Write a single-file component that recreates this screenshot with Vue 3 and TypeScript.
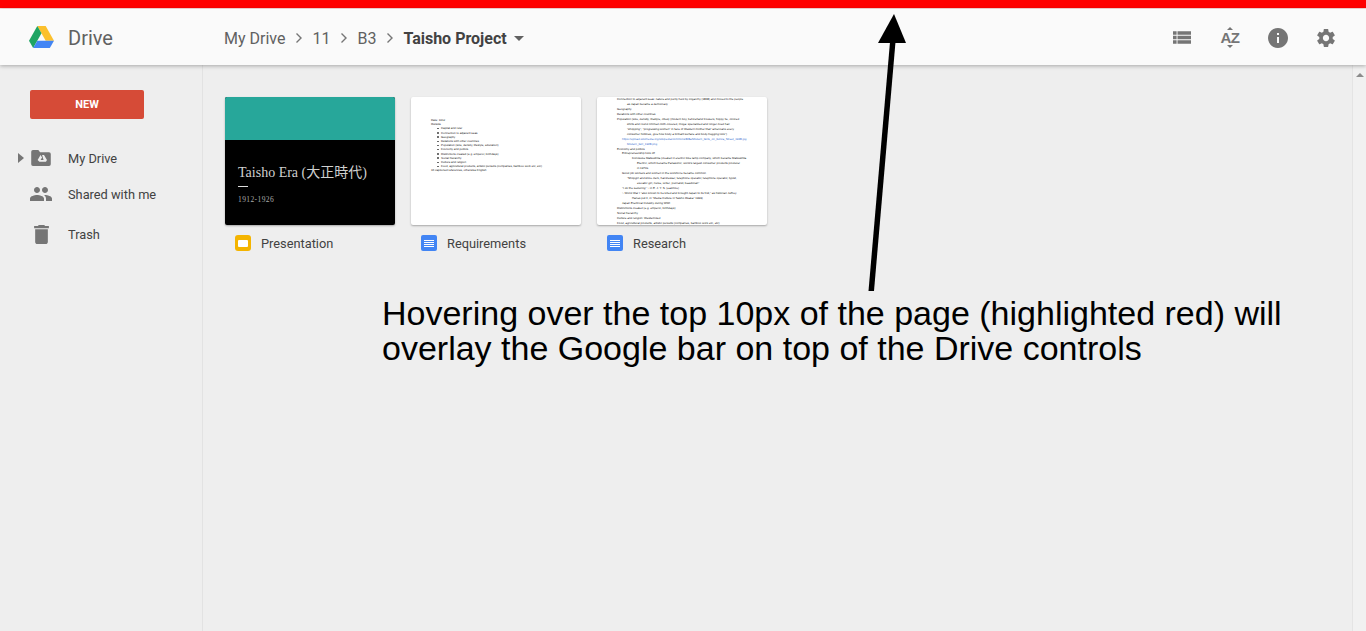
<template>
  <div class="page">
    <div class="hover-strip"></div>
    <header class="topbar">
      <div class="brand">
        <svg class="drive-logo" viewBox="0 0 24 21" width="25" height="22">
          <polygon points="8,0 16,0 24,14 16,14" fill="#fbc02d" />
          <polygon points="8,0 12,7 4,21 0,14" fill="#1fa463" />
          <polygon points="8,14 24,14 20,21 4,21" fill="#4285f4" />
        </svg>
        <span class="brand-name">Drive</span>
      </div>
      <nav class="crumbs">
        <template v-for="c in crumbs" :key="c">
          <span class="crumb">{{ c }}</span>
          <svg class="chevron" viewBox="0 0 8 12" width="8" height="12">
            <path d="M1.5 1.5 6 6l-4.500 4.500" fill="none" stroke="#757575" stroke-width="1.400" />
          </svg>
        </template>
        <span class="crumb current">Taisho Project</span>
        <span class="caret"></span>
      </nav>
      <div class="tools">
        <span class="tool-slot"><svg class="tool" viewBox="2 5 20 14" width="18" height="13"><path d="M2 14h4v-4H2v4zm0 5h4v-4H2v4zM2 9h4V5H2v4zm5 5h15v-4H7v4zm0 5h15v-4H7v4zM7 5v4h15V5H7z" /></svg></span>
        <span class="tool-slot sort">
          <span class="sort-up"></span>
          <span class="sort-text">AZ</span>
          <span class="sort-down"></span>
        </span>
        <span class="tool-slot"><svg class="tool" viewBox="2 2 20 20" width="20" height="20"><path d="M12 2C6.480 2 2 6.480 2 12s4.480 10 10 10 10-4.480 10-10S17.520 2 12 2zm1 15h-2v-6h2v6zm0-8h-2V7h2v2z" /></svg></span>
        <span class="tool-slot"><svg class="tool" viewBox="2 2 20 20" width="18" height="18"><path d="M19.430 12.980c.04-.32.07-.64.07-.98s-.03-.66-.07-.98l2.110-1.650c.19-.15.24-.42.12-.64l-2-3.460c-.12-.22-.39-.3-.61-.22l-2.490 1c-.52-.4-1.080-.73-1.690-.98l-.38-2.650C14.460 2.180 14.250 2 14 2h-4c-.25 0-.46.18-.49.42l-.38 2.650c-.61.25-1.170.59-1.690.98l-2.490-1c-.23-.09-.49 0-.61.22l-2 3.460c-.13.22-.07.49.12.64l2.110 1.650c-.04.32-.07.65-.07.98s.03.66.07.98l-2.110 1.650c-.19.15-.24.42-.12.64l2 3.460c.12.22.39.3.61.22l2.490-1c.52.4 1.080.73 1.690.98l.38 2.650c.03.24.24.42.49.42h4c.25 0 .46-.18.49-.42l.38-2.650c.61-.25 1.170-.59 1.690-.98l2.490 1c.23.09.49 0 .61-.22l2-3.460c.12-.22.07-.49-.12-.64l-2.110-1.650zM12 15.500c-1.930 0-3.500-1.570-3.500-3.500s1.570-3.500 3.500-3.500 3.500 1.570 3.500 3.500-1.570 3.500-3.500 3.500z" /></svg></span>
      </div>
    </header>

    <div class="body">
      <aside class="sidebar">
        <button class="new-btn">NEW</button>
        <ul class="side-list">
          <li class="side-item first">
            <span class="expander"></span>
            <span class="side-slot">
              <svg viewBox="0 0 22 18" width="20" height="16">
                <path d="M2 0h6l2 2.500h10a2 2 0 0 1 2 2V16a2 2 0 0 1-2 2H2a2 2 0 0 1-2-2V2a2 2 0 0 1 2-2z" fill="#757575" />
                <path d="M12.200 5.500h2.200l3.300 5.700-1.100 1.900h-7.400L7.200 11.200l3.300-5.700 1.700 3-1.700 2.700h3.400z" fill="#eee" />
              </svg>
            </span>
            <span>My Drive</span>
          </li>
          <li class="side-item">
            <span class="side-slot">
              <svg viewBox="1 5 22 14" width="22" height="14"><path d="M16 11c1.660 0 2.990-1.340 2.990-3S17.660 5 16 5c-1.660 0-3 1.340-3 3s1.340 3 3 3zm-8 0c1.660 0 2.990-1.340 2.990-3S9.660 5 8 5C6.340 5 5 6.340 5 8s1.340 3 3 3zm0 2c-2.330 0-7 1.170-7 3.500V19h14v-2.500c0-2.330-4.670-3.500-7-3.500zm8 0c-.29 0-.62.02-.97.05 1.160.84 1.970 1.970 1.970 3.450V19h6v-2.500c0-2.330-4.670-3.500-7-3.500z" fill="#757575" /></svg>
            </span>
            <span>Shared with me</span>
          </li>
          <li class="side-item last">
            <span class="side-slot">
              <svg viewBox="5 3 14 18" width="15" height="19"><path d="M6 19c0 1.100.9 2 2 2h8c1.100 0 2-.9 2-2V7H6v12zM19 4h-3.500l-1-1h-5l-1 1H5v2h14V4z" fill="#757575" /></svg>
            </span>
            <span>Trash</span>
          </li>
        </ul>
      </aside>

      <main class="content">
        <div class="file">
          <div class="thumb slide">
            <div class="slide-top"></div>
            <div class="slide-main">
              <div class="slide-title">Taisho Era (大正時代)</div>
              <div class="slide-dash"></div>
              <div class="slide-years">1912-1926</div>
            </div>
          </div>
          <div class="file-label">
            <span class="type-icon slides"><span class="slides-inner"></span></span>
            <span>Presentation</span>
          </div>
        </div>

        <div class="file">
          <div class="thumb doc req">
            <div v-for="(l, i) in reqLines" :key="i" :class="['req-line', { bullet: l.b }]">{{ l.t }}</div>
          </div>
          <div class="file-label">
            <span class="type-icon docs"><span class="docs-lines"></span></span>
            <span>Requirements</span>
          </div>
        </div>

        <div class="file">
          <div class="thumb doc research">
            <div
              v-for="(l, i) in researchLines"
              :key="i"
              class="res-line"
              :class="{ link: l.link }"
              :style="{ paddingLeft: l.i * 5 + 'px' }"
            >{{ l.t }}</div>
          </div>
          <div class="file-label">
            <span class="type-icon docs"><span class="docs-lines"></span></span>
            <span>Research</span>
          </div>
        </div>
      </main>

      <div class="scrollbar"><span class="scroll-up"></span></div>
    </div>

    <!-- annotation drawn over the screenshot -->
    <svg class="arrow" viewBox="0 0 1366 631" width="1366" height="631">
      <polygon points="894,14 906,43 878,43" fill="#000" />
      <polygon points="890,42 895.500,42 874,291 868.500,291" fill="#000" />
    </svg>
    <p class="note">Hovering over the top 10px of the page (highlighted red) will<br />overlay the Google bar on top of the Drive controls</p>
  </div>
</template>

<script setup lang="ts">
const crumbs = ['My Drive', '11', 'B3']

const reqLines = [
  { t: 'Date: 1912', b: false },
  { t: 'Outside', b: false },
  { t: 'Capital and ruler', b: true },
  { t: 'Connection to adjacent seas', b: true },
  { t: 'Geography', b: true },
  { t: 'Relations with other countries', b: true },
  { t: 'Population (size, density, lifestyle, education)', b: true },
  { t: 'Economy and politics', b: true },
  { t: 'Distinctions created (e.g. emperor, birthdays)', b: true },
  { t: 'Social hierarchy', b: true },
  { t: 'Culture and religion', b: true },
  { t: 'Food, agricultural products, artistic pursuits (companies, bamboo work etc, etc)', b: true },
  { t: '10 captioned references, otherwise English', b: false }
]

const researchLines = [
  { t: 'Connection to adjacent seas: nature and purity held by oligarchy (1868) and moved to the people', i: 0 },
  { t: 'as Japan became a democracy', i: 2 },
  { t: 'Geography', i: 0 },
  { t: 'Relations with other countries', i: 0 },
  { t: 'Population (size, density, lifestyle, cities) (modern boy, beforehand trousers, floppy tie, colored', i: 0 },
  { t: 'shirts and round rimmed cloth-covered, moga: specialized and longer-lived hair', i: 2 },
  { t: '"shopping", "progressing women" in face of Western mother that "americans every', i: 2 },
  { t: 'consumer hobbies, give how body a brilliant surface and body-hugging look")', i: 2 },
  { t: 'https://upload.wikimedia.org/wikipedia/commons/8/8a/Modern_Girls_on_Ginza_Street_1928.jpg', i: 1, link: true },
  { t: 'Modern_Girl_1928.png', i: 2, link: true },
  { t: 'Economy and politics', i: 0 },
  { t: 'Entrepreneurship took off', i: 1 },
  { t: 'Konosuke Matsushita (created in electric bike lamp company, which became Matsushita', i: 3 },
  { t: 'Electric, which became Panasonic; world\'s largest consumer products producer', i: 4 },
  { t: 'in 1970s', i: 4 },
  { t: 'Good job workers and women in the workforce became common', i: 1 },
  { t: '"Shopgirl and store clerk, hairdresser, telephone operator, telephone operator, typist,', i: 2 },
  { t: 'elevator girl, nurse, writer, journalist, beautician"', i: 4 },
  { t: '"I do the seducing" ~ in E. J. Y. S. (eadmire)', i: 1 },
  { t: '~ World War I "also known to be killed and brought Japan to its first," as historian Jeffrey', i: 1 },
  { t: 'Hanes put it, in "Media Culture in Taisho Osaka" 1999)', i: 3 },
  { t: 'Japan Electrical Industry during WWI', i: 1 },
  { t: 'Distinctions created (e.g. emperor, birthdays)', i: 0 },
  { t: 'Social hierarchy', i: 0 },
  { t: 'Culture and religion: Westernized', i: 0 },
  { t: 'Food, agricultural products, artistic pursuits (companies, bamboo work etc, etc)', i: 0 }
]
</script>

<style>
html,
body {
  margin: 0;
  height: 100%;
  overflow: hidden;
  background: #eeeeee;
}
</style>

<style scoped>
.page {
  position: relative;
  display: flex;
  flex-direction: column;
  height: 631px;
  font-family: Roboto, "Liberation Sans", sans-serif;
  color: #424242;
  background: #eeeeee;
}

.hover-strip {
  flex: none;
  height: 8px;
  background: #ff0000;
  border-bottom: 1px solid #fbd9d9;
}

.topbar {
  flex: none;
  position: relative;
  z-index: 1;
  display: flex;
  align-items: center;
  height: 56px;
  background: #fafafa;
  box-shadow: 0 1px 4px rgba(0, 0, 0, 0.3);
}

.brand {
  display: flex;
  align-items: center;
  width: 224px;
  padding-left: 29px;
  box-sizing: border-box;
}

.drive-logo {
  flex: none;
}

.brand-name {
  margin: 2px 0 0 14px;
  font-size: 20px;
  color: #616161;
}

.crumbs {
  display: flex;
  align-items: center;
  gap: 9.500px;
  margin-top: 2px;
  font-size: 16px;
  color: #616161;
}

.crumb.current {
  font-weight: 700;
  color: #424242;
}

.caret {
  margin-left: -2px;
  width: 0;
  height: 0;
  border-left: 5px solid transparent;
  border-right: 5px solid transparent;
  border-top: 5px solid #616161;
}

.tools {
  display: flex;
  align-items: center;
  gap: 24px;
  margin: 1px 0 0 auto;
  padding-right: 28px;
}

.tool-slot {
  display: flex;
  align-items: center;
  justify-content: center;
  width: 24px;
  height: 24px;
}

.tool {
  fill: #757575;
}

.sort {
  flex-direction: column;
}

.sort-text {
  font-family: "Liberation Sans", sans-serif;
  font-size: 15px;
  line-height: 13px;
  font-weight: 700;
  letter-spacing: -0.5px;
  color: #757575;
}

.sort-up,
.sort-down {
  width: 0;
  height: 0;
  border-left: 3px solid transparent;
  border-right: 3px solid transparent;
}

.sort-up {
  border-bottom: 3px solid #757575;
  margin-bottom: 1px;
}

.sort-down {
  border-top: 3px solid #757575;
  margin-top: 1px;
}

.body {
  flex: 1;
  display: flex;
  min-height: 0;
}

.sidebar {
  flex: none;
  width: 203px;
  box-sizing: border-box;
  padding: 25px 0 0 30px;
  border-right: 1px solid #e2e2e2;
}

.new-btn {
  display: block;
  width: 114px;
  height: 29px;
  padding: 0;
  border: none;
  border-radius: 2px;
  background: #d64b37;
  color: #fff;
  font-family: inherit;
  font-size: 11px;
  font-weight: 700;
}

.side-list {
  list-style: none;
  margin: 26px 0 0;
  padding: 0;
  font-size: 12.800px;
  color: #424242;
}

.side-item {
  position: relative;
  display: flex;
  align-items: center;
  height: 26px;
}

.side-item + .side-item {
  margin-top: 10px;
}

.side-item.last {
  margin-top: 14px;
}

.side-slot {
  flex: none;
  display: flex;
  justify-content: center;
  width: 22px;
  margin-right: 16px;
}

.expander {
  position: absolute;
  left: -12px;
  width: 0;
  height: 0;
  border-top: 5px solid transparent;
  border-bottom: 5px solid transparent;
  border-left: 6px solid #757575;
}

.content {
  flex: 1;
  display: flex;
  align-items: flex-start;
  gap: 16px;
  padding: 32px 0 0 22px;
}

.file {
  width: 170px;
}

.thumb {
  height: 128px;
  box-sizing: border-box;
  overflow: hidden;
  border-radius: 2px;
  background: #fff;
  box-shadow: 0 1px 2px rgba(0, 0, 0, 0.3);
}

.slide {
  display: flex;
  flex-direction: column;
  background: #000;
}

.slide-top {
  height: 43px;
  background: #27a79a;
}

.slide-main {
  padding: 24px 13px 0;
  font-family: "Liberation Serif", "Noto Sans CJK JP", serif;
  color: #cfcfcf;
}

.slide-title {
  font-size: 14px;
  line-height: 18px;
  white-space: nowrap;
}

.slide-dash {
  width: 10px;
  height: 1px;
  margin-top: 4px;
  background: #ddd;
}

.slide-years {
  margin-top: 8px;
  font-size: 7.500px;
  line-height: 9px;
  letter-spacing: 0.4px;
  color: #aaa;
}

.file-label {
  display: flex;
  align-items: center;
  gap: 10px;
  height: 16px;
  margin-top: 10px;
  padding-left: 10px;
  font-size: 12.800px;
  color: #424242;
}

.type-icon {
  flex: none;
  display: flex;
  align-items: center;
  justify-content: center;
  width: 16px;
  height: 16px;
  border-radius: 2px;
}

.type-icon.slides {
  background: #f4b400;
  border-radius: 3px;
}

.slides-inner {
  width: 10px;
  height: 7px;
  background: #fff;
  border-radius: 1px;
}

.type-icon.docs {
  background: #4285f4;
}

.docs-lines {
  width: 10px;
  height: 7px;
  background: repeating-linear-gradient(#fff 0 1px, transparent 1px 2px);
}

.doc {
  font-family: "Liberation Sans", sans-serif;
  color: #222;
  text-rendering: geometricPrecision;
}

.req {
  padding: 21px 0 0 20px;
}

.req-line {
  position: relative;
  font-size: 2.900px;
  line-height: 4.200px;
  white-space: nowrap;
}

.req-line.bullet {
  padding-left: 10px;
}

.req-line.bullet::before {
  content: "";
  position: absolute;
  left: 6px;
  top: 1.500px;
  width: 1.500px;
  height: 1.500px;
  border-radius: 50%;
  background: #555;
}

.research {
  padding: 0 0 0 20px;
}

.res-line {
  font-size: 2.950px;
  line-height: 4.960px;
  white-space: nowrap;
}

.res-line.link {
  color: #3b70d0;
}

.scrollbar {
  flex: none;
  display: flex;
  justify-content: center;
  width: 14px;
  padding-top: 8px;
  box-sizing: border-box;
  background: #f1f1f1;
  border-left: 1px solid #e4e4e4;
}

.scroll-up {
  width: 0;
  height: 0;
  border-left: 4px solid transparent;
  border-right: 4px solid transparent;
  border-bottom: 4px solid #8c8c8c;
}

.arrow {
  position: absolute;
  left: 0;
  top: 0;
  z-index: 2;
  pointer-events: none;
}

.note {
  position: absolute;
  z-index: 2;
  left: 382px;
  top: 296px;
  margin: 0;
  font-family: "Liberation Sans", Arial, sans-serif;
  font-size: 34px;
  line-height: 35px;
  color: #000;
  white-space: nowrap;
}
</style>
